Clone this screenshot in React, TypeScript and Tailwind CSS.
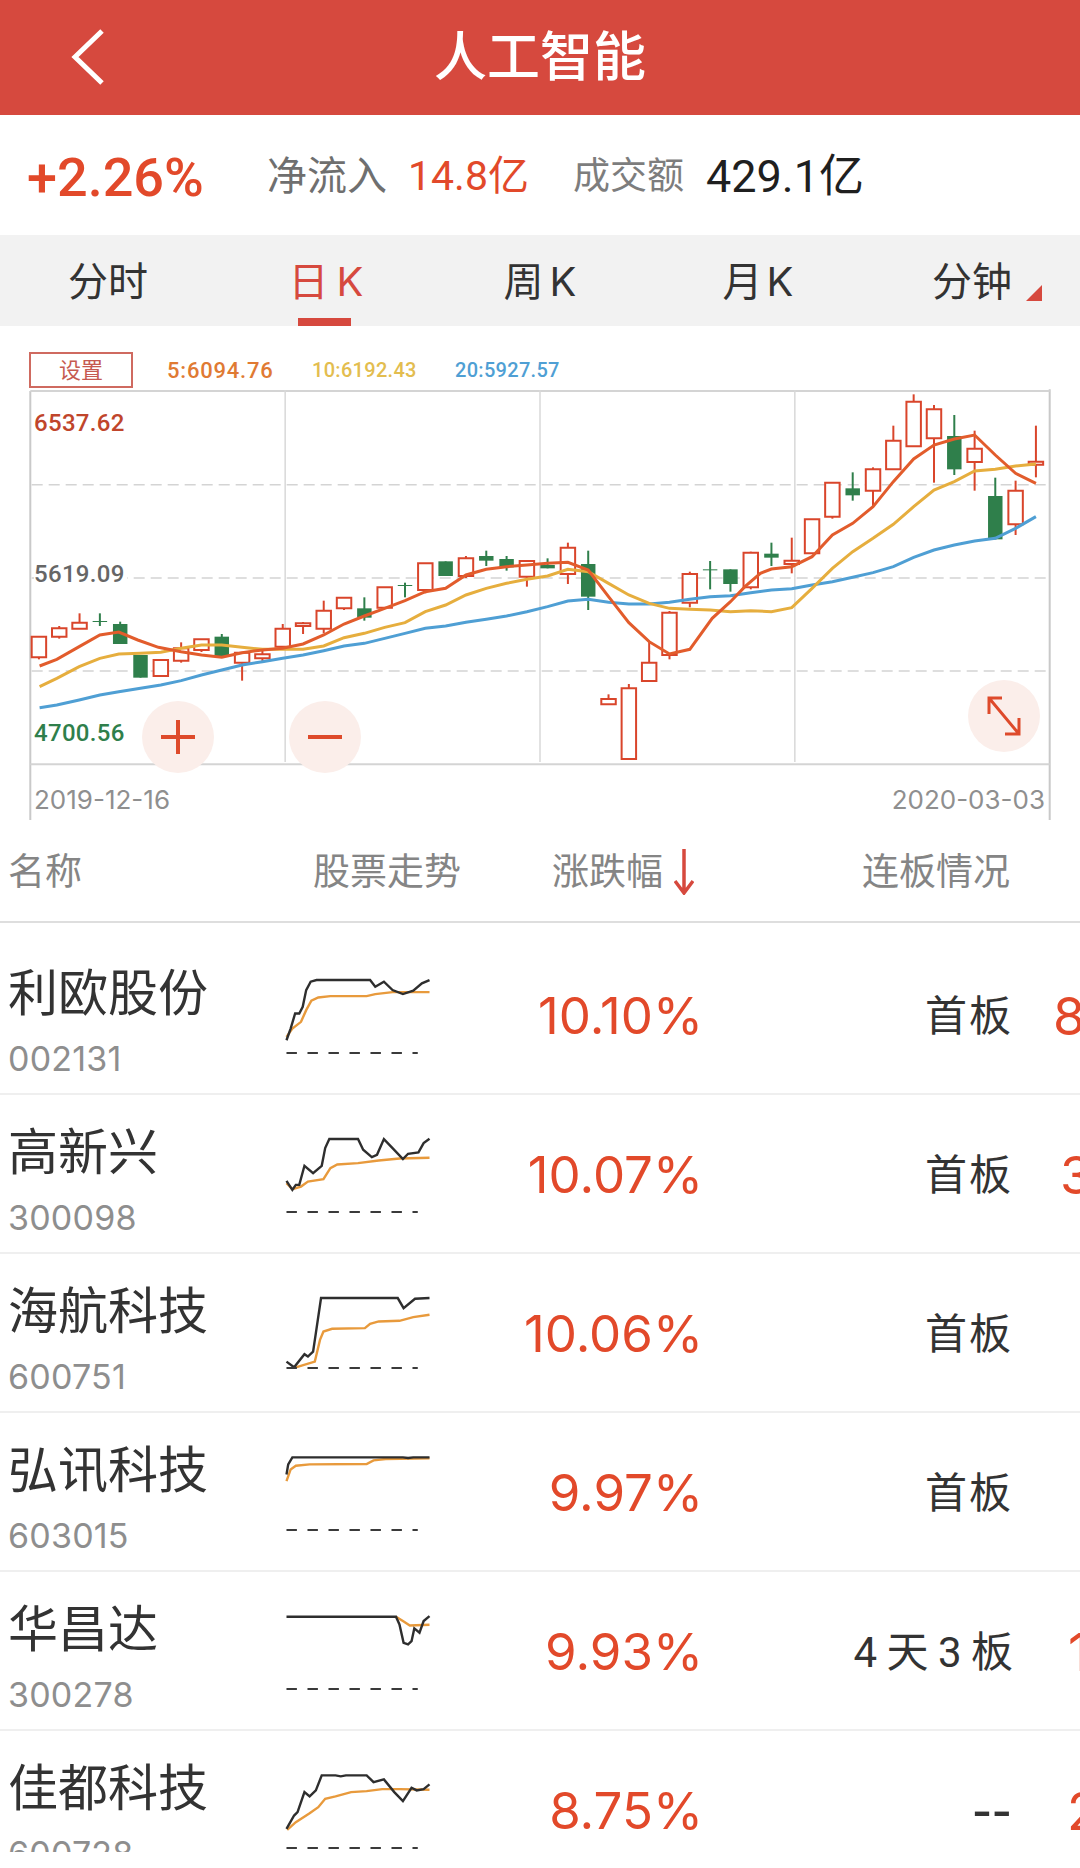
type Candle = [number, number, number, number, number, boolean];

// x, body top, body bottom, wick top, wick bottom, green
const candles: Candle[] = [
  [113, 890, 952, 890, 958, false],
  [172, 865, 890, 858, 896, false],
  [231, 848, 866, 820, 866, false],
  [290, 843, 846, 820, 858, true],
  [349, 852, 912, 845, 912, true],
  [408, 945, 1013, 945, 1013, true],
  [467, 960, 1008, 960, 1008, false],
  [526, 925, 962, 907, 968, false],
  [585, 898, 930, 898, 936, false],
  [644, 890, 948, 882, 948, true],
  [703, 938, 968, 938, 1022, false],
  [762, 943, 955, 930, 968, false],
  [821, 866, 920, 852, 920, false],
  [880, 850, 858, 846, 882, false],
  [940, 812, 866, 782, 880, false],
  [999, 773, 805, 773, 810, false],
  [1058, 805, 833, 772, 842, true],
  [1117, 742, 803, 742, 803, false],
  [1176, 735, 738, 728, 772, true],
  [1235, 670, 750, 670, 760, false],
  [1294, 664, 708, 664, 708, true],
  [1353, 655, 708, 648, 714, false],
  [1412, 648, 662, 632, 678, true],
  [1471, 657, 682, 648, 692, true],
  [1530, 663, 710, 663, 740, false],
  [1590, 675, 685, 655, 685, true],
  [1649, 623, 702, 608, 732, false],
  [1708, 672, 770, 632, 810, true],
  [1767, 1077, 1093, 1063, 1093, false],
  [1826, 1045, 1257, 1032, 1257, false],
  [1885, 968, 1023, 905, 1023, false],
  [1944, 818, 945, 813, 958, false],
  [2003, 702, 788, 695, 802, false],
  [2062, 688, 691, 663, 748, true],
  [2121, 688, 732, 688, 755, true],
  [2180, 638, 742, 635, 748, false],
  [2240, 641, 653, 608, 678, true],
  [2299, 662, 672, 593, 700, false],
  [2358, 538, 640, 538, 640, false],
  [2417, 428, 530, 428, 536, false],
  [2476, 445, 466, 397, 482, true],
  [2535, 388, 452, 382, 500, false],
  [2594, 302, 388, 257, 388, false],
  [2653, 185, 319, 163, 319, false],
  [2712, 208, 295, 195, 428, false],
  [2771, 288, 388, 225, 405, true],
  [2830, 326, 366, 272, 452, false],
  [2890, 468, 598, 413, 598, true],
  [2949, 452, 553, 422, 585, false],
  [3008, 365, 374, 257, 412, false],
];

const ma5 =
  "115,978 165,958 230,920 290,885 345,876 400,900 460,922 526,935 585,945 644,952 703,938 762,930 821,925 880,912 940,885 999,852 1058,828 1117,805 1176,782 1235,755 1294,745 1353,705 1412,688 1471,680 1530,675 1590,670 1649,667 1708,690 1767,770 1826,848 1885,905 1944,942 2003,928 2068,835 2121,785 2163,740 2208,700 2240,687 2299,680 2358,650 2417,585 2476,550 2535,500 2594,425 2653,357 2712,315 2771,297 2830,285 2890,345 2949,400 3008,430";
const ma10 =
  "115,1040 165,1015 230,980 290,955 345,942 408,940 467,937 526,925 585,915 644,915 703,922 762,928 821,928 880,928 940,918 999,893 1058,880 1117,862 1176,848 1235,815 1294,795 1353,765 1412,745 1471,730 1530,718 1590,708 1649,688 1708,695 1767,730 1826,765 1885,790 1944,805 2003,808 2062,810 2121,815 2180,812 2240,815 2299,803 2358,745 2417,685 2476,635 2535,595 2594,553 2653,500 2712,450 2771,425 2830,393 2890,388 2949,378 3008,372";
const ma20 =
  "115,1103 165,1095 230,1080 290,1065 345,1055 408,1045 467,1035 526,1022 585,1005 644,990 703,975 762,965 821,955 880,945 940,932 999,918 1058,910 1117,895 1176,880 1235,865 1294,858 1353,847 1412,838 1471,828 1530,815 1590,800 1649,783 1708,778 1767,787 1826,792 1885,792 1944,787 2003,778 2062,770 2121,767 2180,758 2240,750 2299,746 2358,735 2417,725 2476,712 2535,698 2594,680 2653,652 2712,630 2771,615 2830,603 2890,595 2949,565 3008,530";

const stocks = [
  {
    name: "利欧股份",
    code: "002131",
    pct: "10.10%",
    status: "首板",
    statusClass: "text-[42px] tracking-[2px]",
    tail: "8",
    tailClass: "pl-[40px]",
    rowClass: "h-[172px] pt-[13px]",
    base: 698,
    dash: 698,
    black: "833,660 845,625 858,580 870,580 880,560 890,510 903,485 920,480 1075,480 1090,500 1115,485 1140,510 1170,522 1200,512 1225,490 1247,480",
    orange: "833,650 850,625 875,605 890,570 905,542 925,532 960,528 1065,528 1090,522 1140,516 1247,516",
  },
  {
    name: "高新兴",
    code: "300098",
    pct: "10.07%",
    status: "首板",
    statusClass: "text-[42px] tracking-[2px]",
    tail: "3",
    tailClass: "pl-[47px]",
    rowClass: "h-[159px]",
    base: 1176,
    dash: 1176,
    black: "833,1083 850,1110 860,1095 870,1095 885,1038 910,1060 935,1038 945,985 957,958 1040,958 1055,990 1080,1012 1095,1005 1115,958 1140,985 1170,1018 1185,1002 1215,998 1230,970 1247,957",
    orange: "833,1090 850,1108 875,1100 895,1085 940,1078 960,1045 980,1034 1040,1030 1100,1022 1160,1016 1247,1014",
  },
  {
    name: "海航科技",
    code: "600751",
    pct: "10.06%",
    status: "首板",
    statusClass: "text-[42px] tracking-[2px]",
    tail: "",
    tailClass: "",
    rowClass: "h-[159px]",
    base: 1653,
    dash: 1644,
    black: "833,1625 855,1642 885,1603 895,1610 910,1595 918,1540 933,1435 1155,1435 1172,1465 1205,1437 1247,1435",
    orange: "860,1642 915,1625 930,1560 940,1535 965,1527 1060,1525 1075,1512 1100,1505 1160,1503 1200,1492 1247,1485",
  },
  {
    name: "弘讯科技",
    code: "603015",
    pct: "9.97%",
    status: "首板",
    statusClass: "text-[42px] tracking-[2px]",
    tail: "",
    tailClass: "",
    rowClass: "h-[159px]",
    base: 566,
    dash: 566,
    black: "833,400 838,370 850,349 1170,349 1185,351 1200,349 1247,349",
    orange: "833,420 845,385 860,374 900,370 1065,369 1085,358 1120,354 1247,352",
  },
  {
    name: "华昌达",
    code: "300278",
    pct: "9.93%",
    status: "4 天 3 板",
    statusClass: "text-[42px] [word-spacing:-1px]",
    tail: "1",
    tailClass: "pl-[55px]",
    rowClass: "h-[159px]",
    base: 1038,
    dash: 1038,
    black: "833,822 1150,822 1160,845 1172,900 1185,905 1195,895 1203,857 1218,870 1230,835 1247,820",
    orange: "1150,822 1170,835 1190,848 1247,846",
  },
  {
    name: "佳都科技",
    code: "600728",
    pct: "8.75%",
    status: "--",
    statusClass: "text-[60px] tracking-[3px]",
    tail: "2",
    tailClass: "pl-[54px]",
    rowClass: "h-[159px]",
    base: 1512,
    dash: 1512,
    black: "833,1455 855,1415 865,1405 885,1345 900,1358 918,1340 935,1295 975,1295 990,1298 1005,1295 1065,1295 1085,1315 1115,1307 1145,1345 1170,1372 1195,1332 1210,1340 1230,1336 1247,1322",
    orange: "835,1458 860,1435 900,1408 925,1390 945,1365 975,1358 1020,1345 1065,1342 1110,1336 1160,1336 1247,1338",
  },
];

function Sparkline({ base, dash, black, orange }: { base: number; dash: number; black: string; orange: string }) {
  return (
    <svg
      width={152}
      height={97}
      viewBox={`820 ${base - 260} 440 290`}
      preserveAspectRatio="none"
      className="mt-[30px] shrink-0 self-start"
    >
      <polyline points={orange} fill="none" stroke="#e89a3c" strokeWidth={2.4} vectorEffect="non-scaling-stroke" />
      <polyline points={black} fill="none" stroke="#2e2e2e" strokeWidth={2.4} vectorEffect="non-scaling-stroke" />
      <line
        x1={833}
        y1={dash}
        x2={1213}
        y2={dash}
        stroke="#3a3a3a"
        strokeWidth={2}
        strokeDasharray="10.4 10.6"
        vectorEffect="non-scaling-stroke"
      />
    </svg>
  );
}

function KChart() {
  const ns = { vectorEffect: "non-scaling-stroke" as const };
  return (
    <svg
      viewBox="0 -42 3136 1482"
      preserveAspectRatio="none"
      className="absolute inset-0 h-[494px] w-[1080px]"
    >
      {/* frame */}
      <line x1={88} y1={153} x2={88} y2={1440} stroke="#c9c9c9" strokeWidth={2} {...ns} />
      <line x1={3048} y1={148} x2={3048} y2={1440} stroke="#c9c9c9" strokeWidth={2} {...ns} />
      <line x1={88} y1={153} x2={3048} y2={153} stroke="#d4d4d4" strokeWidth={2} {...ns} />
      <line x1={88} y1={1273} x2={3048} y2={1273} stroke="#d4d4d4" strokeWidth={2} {...ns} />
      {[828, 1568, 2308].map((x) => (
        <line key={x} x1={x} y1={150} x2={x} y2={1266} stroke="#d8d8d8" strokeWidth={1.5} {...ns} />
      ))}
      {[434, 714, 993].map((y) => (
        <line
          key={y}
          x1={92}
          y1={y}
          x2={3048}
          y2={y}
          stroke="#d4d4d4"
          strokeWidth={1.5}
          strokeDasharray="11 6"
          {...ns}
        />
      ))}
      {/* candles */}
      {candles.map(([x, top, bottom, wickTop, wickBottom, green]) => {
        const color = green ? "#2f7f4b" : "#d9452b";
        return (
          <g key={x}>
            <line x1={x} y1={wickTop} x2={x} y2={wickBottom} stroke={color} strokeWidth={2} {...ns} />
            <rect
              x={x - 21}
              y={top}
              width={42}
              height={bottom - top}
              fill={green ? color : "#ffffff"}
              stroke={color}
              strokeWidth={green ? 0 : 2}
              {...ns}
            />
          </g>
        );
      })}
      <polyline points={ma20} fill="none" stroke="#4f9fd4" strokeWidth={3} {...ns} />
      <polyline points={ma10} fill="none" stroke="#e6ae3e" strokeWidth={3} {...ns} />
      <polyline points={ma5} fill="none" stroke="#e25c2c" strokeWidth={3} {...ns} />
    </svg>
  );
}

export default function App() {
  return (
    <div className="h-[1868px] w-[1080px] overflow-hidden bg-white font-['Inter','Noto_Sans_CJK_SC',sans-serif]">
      {/* Header */}
      <header className="relative flex h-[115px] items-center justify-center bg-[#d6493e]">
        <svg width="34" height="56" viewBox="0 0 34 56" className="absolute left-[71px] top-[29px]">
          <path d="M31 2 L4 28 L31 54" fill="none" stroke="#fff" strokeWidth="5" />
        </svg>
        <h1 className="text-[53px] leading-none font-medium text-white">人工智能</h1>
      </header>

      {/* Stats */}
      <section className="flex h-[120px] items-center pl-[27px] pt-[4px] font-['Roboto','Noto_Sans_CJK_SC',sans-serif]">
        <span className="w-[240px] text-[54px] font-medium text-[#e2492a]">+2.26%</span>
        <span className="w-[141px] text-[40px] text-[#6f6f6f]">净流入</span>
        <span className="w-[165px] text-[41px] text-[#e2492a]">14.8亿</span>
        <span className="w-[133px] text-[37px] text-[#7d7d7d]">成交额</span>
        <span className="text-[45px] text-[#1f1f1f]">429.1亿</span>
      </section>

      {/* Tabs */}
      <nav className="grid h-[91px] grid-cols-5 bg-[#f2f2f2] pt-[2px] text-[40px] text-[#333]">
        <div className="flex items-center justify-center">分时</div>
        <div className="relative -mt-[2px] flex items-center justify-center gap-[8px] pt-[2px] pl-[4px] text-[#d6493e]">
          <span>日</span>
          <span>K</span>
          <div className="absolute bottom-0 left-[82px] h-[8px] w-[53px] bg-[#d6493e]" />
        </div>
        <div className="flex items-center justify-center gap-[6px]">
          <span>周</span>
          <span>K</span>
        </div>
        <div className="flex items-center justify-center gap-[4px] pl-[4px]">
          <span>月</span>
          <span>K</span>
        </div>
        <div className="relative flex items-center justify-center">
          分钟
          <div className="absolute left-[162px] top-[48px] h-0 w-0 border-b-[16px] border-l-[16px] border-b-[#d6493e] border-l-transparent" />
        </div>
      </nav>

      {/* Chart */}
      <section className="relative flex h-[494px] flex-col font-['Roboto','Noto_Sans_CJK_SC',sans-serif]">
        <KChart />
        <div className="relative flex items-center pl-[29px] pt-[26px] font-medium">
          <div className="flex h-[36px] w-[104px] items-center justify-center border-2 border-[#cf6a60] text-[22px] font-normal text-[#c65a50]">
            设置
          </div>
          <span className="ml-[34px] w-[145px] text-[22px] tracking-[0.8px] text-[#e07a33]">5:6094.76</span>
          <span className="w-[143px] text-[20px] tracking-[0.3px] text-[#e3bd4f]">10:6192.43</span>
          <span className="text-[20px] tracking-[0.3px] text-[#4f9fd4]">20:5927.57</span>
        </div>
        <div className="absolute left-[34px] top-[81px] text-[24px] leading-[32px] font-medium tracking-[0.3px] text-[#c0452b]">
          6537.62
        </div>
        <div className="absolute left-[34px] top-[232px] bg-white pr-[2px] text-[24px] leading-[32px] font-medium tracking-[0.3px] text-[#666]">
          5619.09
        </div>
        <div className="absolute left-[34px] top-[391px] text-[24px] leading-[32px] font-medium tracking-[0.3px] text-[#2f7f4b]">
          4700.56
        </div>
        <div className="absolute left-[142px] top-[375px] flex h-[72px] w-[72px] items-center justify-center rounded-full bg-[#fbeeea]">
          <svg width="34" height="34" viewBox="0 0 34 34">
            <path d="M17 0 V34 M0 17 H34" stroke="#de4a2b" strokeWidth="4" fill="none" />
          </svg>
        </div>
        <div className="absolute left-[289px] top-[375px] flex h-[72px] w-[72px] items-center justify-center rounded-full bg-[#fbeeea]">
          <svg width="34" height="34" viewBox="0 0 34 34">
            <path d="M0 17 H34" stroke="#de4a2b" strokeWidth="4" fill="none" />
          </svg>
        </div>
        <div className="absolute left-[968px] top-[354px] flex h-[72px] w-[72px] items-center justify-center rounded-full bg-[#fbeeea]">
          <svg width="36" height="40" viewBox="0 0 36 40">
            <path d="M3 18 V2 H16 M3 2 L33 38 M33 22 V38 H19" stroke="#de4a2b" strokeWidth="3" fill="none" />
          </svg>
        </div>
        <div className="relative mt-[393px] flex h-[36px] items-center justify-between pl-[34px] pr-[35px] font-['Inter',sans-serif] text-[26px] text-[#8f8f8f]">
          <span>2019-12-16</span>
          <span>2020-03-03</span>
        </div>
      </section>

      {/* Table header */}
      <div className="flex h-[103px] items-center border-b-2 border-[#dedede] pt-[2px] text-[37px] text-[#858585]">
        <div className="w-[313px] pl-[8px]">名称</div>
        <div className="w-[239px]">股票走势</div>
        <div className="flex w-[310px] items-center">
          涨跌幅
          <svg width="20" height="46" viewBox="0 0 20 46" className="ml-[11px]">
            <path d="M10 0 V44 M1 32 L10 44 L19 32" stroke="#d6493e" strokeWidth="3.5" fill="none" />
          </svg>
        </div>
        <div>连板情况</div>
      </div>

      {/* Rows */}
      <div className="h-[929px] overflow-hidden">
        {stocks.map((s) => (
          <div key={s.code} className={`flex border-b-2 border-[#efefef] ${s.rowClass}`}>
            <div className="w-[282px] shrink-0 pl-[8px] pt-[32px]">
              <div className="text-[50px] leading-[50px] text-[#333]">{s.name}</div>
              <div className="mt-[24px] text-[34px] leading-[34px] tracking-[0.2px] text-[#8e8e8e]">{s.code}</div>
            </div>
            <Sparkline base={s.base} dash={s.dash} black={s.black} orange={s.orange} />
            <div className="flex w-[269px] shrink-0 items-center justify-end pt-[4px] text-[51px] text-[#e2492a]">
              {s.pct}
            </div>
            <div
              className={`flex w-[310px] shrink-0 items-center justify-end pt-[4px] font-['Roboto','Noto_Sans_CJK_SC',sans-serif] text-[#333] ${s.statusClass}`}
            >
              {s.status}
            </div>
            <div
              className={`flex w-[67px] shrink-0 items-center overflow-hidden whitespace-nowrap pt-[4px] text-[52px] text-[#e2492a] ${s.tailClass}`}
            >
              {s.tail}
            </div>
          </div>
        ))}
      </div>
    </div>
  );
}
